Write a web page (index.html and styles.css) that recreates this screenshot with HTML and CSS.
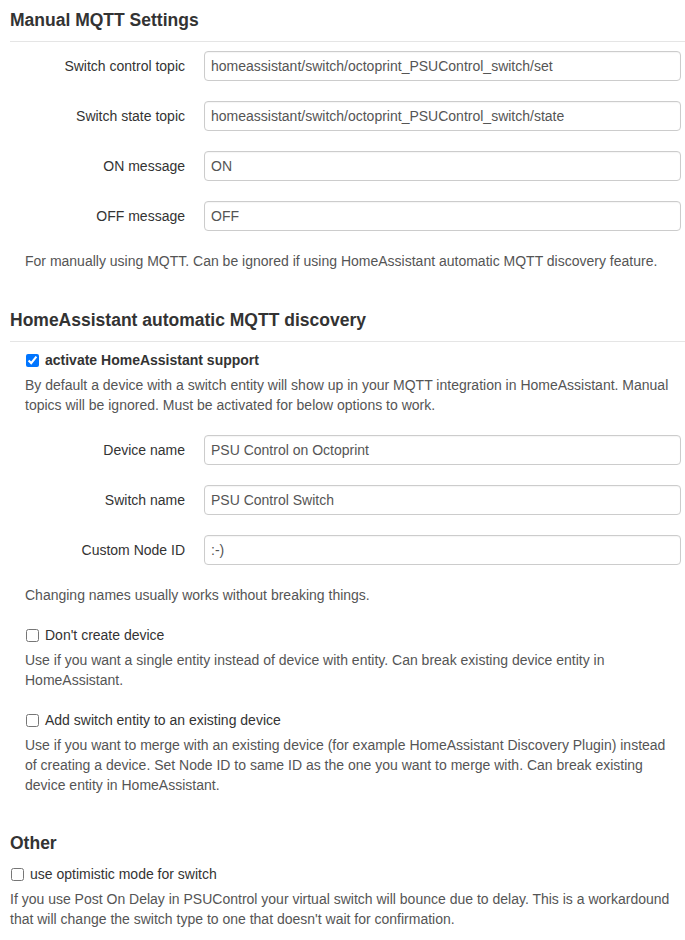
FILE: index.html
```html
<!DOCTYPE html>
<html lang="en">
<head>
<meta charset="utf-8">
<title>MQTT Settings</title>
<link rel="stylesheet" href="styles.css">
</head>
<body>
<div class="page">
  <h3 class="legend">Manual MQTT Settings</h3>
  <div class="section">
    <div class="field first">
      <label class="control-label">Switch control topic</label>
      <input class="text" type="text" value="homeassistant/switch/octoprint_PSUControl_switch/set">
    </div>
    <div class="field">
      <label class="control-label">Switch state topic</label>
      <input class="text" type="text" value="homeassistant/switch/octoprint_PSUControl_switch/state">
    </div>
    <div class="field">
      <label class="control-label">ON message</label>
      <input class="text" type="text" value="ON">
    </div>
    <div class="field">
      <label class="control-label">OFF message</label>
      <input class="text" type="text" value="OFF">
    </div>
    <p class="help spaced">For manually using MQTT. Can be ignored if using HomeAssistant automatic MQTT discovery feature.</p>
  </div>

  <h3 class="legend gap">HomeAssistant automatic MQTT discovery</h3>
  <div class="section">
    <label class="check first-check"><input type="checkbox" checked><span class="strong">activate HomeAssistant support</span></label>
    <p class="help">By default a device with a switch entity will show up in your MQTT integration in HomeAssistant. Manual topics will be ignored. Must be activated for below options to work.</p>
    <div class="field spaced">
      <label class="control-label">Device name</label>
      <input class="text" type="text" value="PSU Control on Octoprint">
    </div>
    <div class="field">
      <label class="control-label">Switch name</label>
      <input class="text" type="text" value="PSU Control Switch">
    </div>
    <div class="field">
      <label class="control-label">Custom Node ID</label>
      <input class="text" type="text" value=":-)">
    </div>
    <p class="help spaced">Changing names usually works without breaking things.</p>
    <label class="check spaced"><input type="checkbox"><span>Don't create device</span></label>
    <p class="help">Use if you want a single entity instead of device with entity. Can break existing device entity in HomeAssistant.</p>
    <label class="check spaced"><input type="checkbox"><span>Add switch entity to an existing device</span></label>
    <p class="help">Use if you want to merge with an existing device (for example HomeAssistant Discovery Plugin) instead of creating a device. Set Node ID to same ID as the one you want to merge with. Can break existing device entity in HomeAssistant.</p>
  </div>

  <h3 class="plain-title">Other</h3>
  <div class="section flat">
    <label class="check other-check"><input type="checkbox"><span>use optimistic mode for switch</span></label>
    <p class="help">If you use Post On Delay in PSUControl your virtual switch will bounce due to delay. This is a workardound that will change the switch type to one that doesn't wait for confirmation.</p>
  </div>
</div>
</body>
</html>
```

FILE: styles.css
```css
html, body {
  margin: 0;
  padding: 0;
  background: #ffffff;
}

body {
  font-family: "Liberation Sans", Arial, Helvetica, sans-serif;
  font-size: 14px;
  line-height: 20px;
  color: #333333;
}

.page {
  padding: 10px 0 0 10px;
}

.legend {
  margin: 0;
  font-size: 17.5px;
  font-weight: bold;
  line-height: 20px;
  color: #333333;
  padding-bottom: 11px;
  border-bottom: 1px solid #e5e5e5;
}

.legend.gap {
  margin-top: 39px;
}

.plain-title {
  margin: 38px 0 0 0;
  font-size: 17.5px;
  font-weight: bold;
  line-height: 20px;
  color: #333333;
}

.section {
  padding-left: 15px;
  padding-right: 4px;
  display: flex;
  flex-direction: column;
}

.section.flat {
  padding-left: 0;
}

.field {
  display: grid;
  grid-template-columns: 160px 1fr;
  column-gap: 19px;
  align-items: center;
  margin-top: 20px;
}

.field.first {
  margin-top: 9px;
}

.control-label {
  text-align: right;
  color: #333333;
}

.text {
  box-sizing: border-box;
  height: 30px;
  padding: 4px 6px;
  border: 1px solid #cccccc;
  border-radius: 4px;
  font-family: "Liberation Sans", Arial, Helvetica, sans-serif;
  font-size: 14px;
  line-height: 20px;
  color: #555555;
  background: #ffffff;
  box-shadow: inset 0 1px 1px rgba(0, 0, 0, 0.04);
  width: 100%;
  margin: 0;
}

.help {
  margin: 5px 0 0 0;
  padding-right: 6px;
  color: #555555;
}

.spaced {
  margin-top: 20px;
}

.check {
  display: flex;
  align-items: center;
  height: 20px;
  color: #333333;
}

.check input {
  margin: 0 6px 0 1px;
  width: 13px;
  height: 13px;
}

.first-check {
  margin-top: 8px;
}

.other-check {
  margin-top: 11px;
}

.strong {
  font-weight: bold;
}
```
